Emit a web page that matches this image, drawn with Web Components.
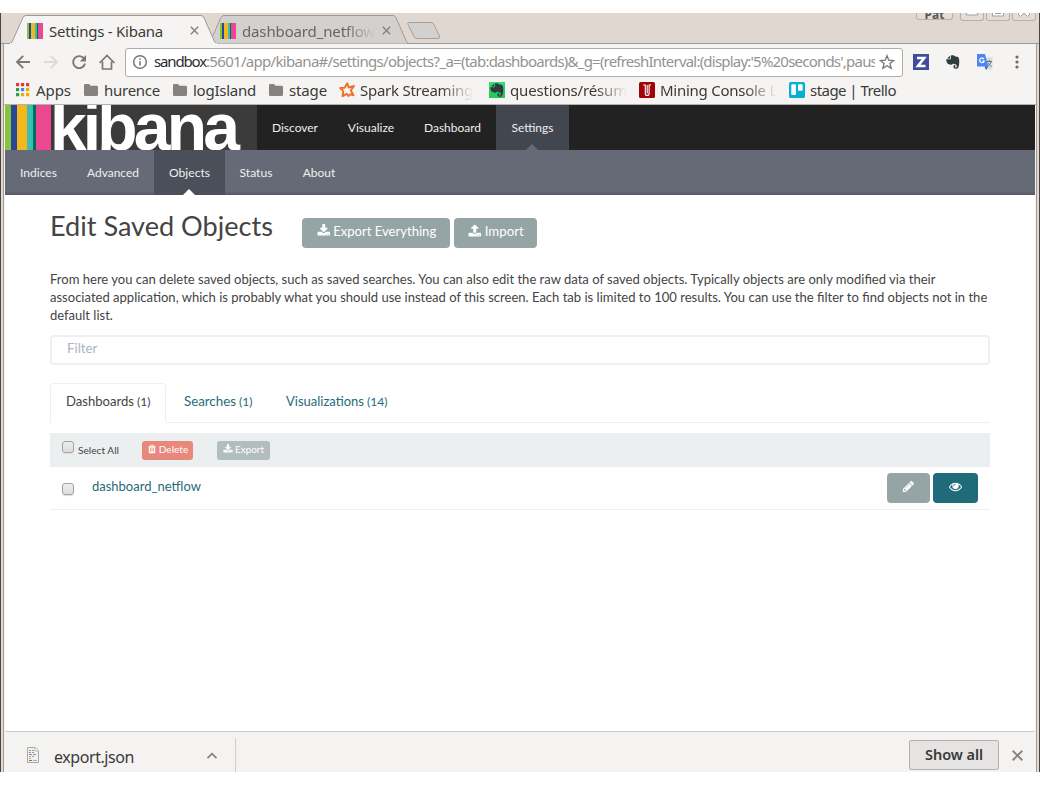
<!DOCTYPE html>
<html lang="en">
<head>
<meta charset="utf-8">
<title>Settings - Kibana</title>
<style>
html,body{margin:0;padding:0;background:#fff}
body{width:1040px;height:785px;overflow:hidden;padding-top:13px;box-sizing:border-box}
</style>
</head>
<body>
<browser-window></browser-window>
<script>
const UI = '"Noto Sans","Open Sans",sans-serif';
const LATO = 'Lato,"Open Sans",sans-serif';

function define(name, html, extra) {
  const tpl = document.createElement('template');
  tpl.innerHTML = typeof html === 'string' ? html : '';
  customElements.define(name, class extends HTMLElement {
    connectedCallback() {
      if (this.shadowRoot) return;
      const root = this.attachShadow({ mode: 'open' });
      if (typeof html === 'function') root.innerHTML = html(this);
      else root.appendChild(tpl.content.cloneNode(true));
      if (extra) extra(this, root);
    }
  });
}

/* Text set to a given advance width, by letter spacing or (mode="size") by font size. */
define('fit-text', '<style>:host{display:inline-block;white-space:pre;flex:none}span{display:inline-block}</style><span><slot></slot></span>', (el, root) => {
  const w = parseFloat(el.getAttribute('w'));
  const span = root.querySelector('span');
  el.style.width = w + 'px';
  const natural = span.getBoundingClientRect().width;
  if (!natural) return;
  if (el.getAttribute('mode') === 'size') {
    const fs = parseFloat(getComputedStyle(el).fontSize);
    span.style.fontSize = (fs * w / natural).toFixed(3) + 'px';
  } else {
    span.style.letterSpacing = ((w - natural) / el.textContent.length).toFixed(3) + 'px';
  }
});

/* Icons */
const FA = {
  download: 'M1344 1344q0-26-19-45t-45-19-45 19-19 45 19 45 45 19 45-19 19-45zm256 0q0-26-19-45t-45-19-45 19-19 45 19 45 45 19 45-19 19-45zm128-224v320q0 40-28 68t-68 28h-1472q-40 0-68-28t-28-68v-320q0-40 28-68t68-28h465l135 136q58 56 136 56t136-56l136-136h464q40 0 68 28t28 68zm-325-569q17 41-14 70l-448 448q-18 19-45 19t-45-19l-448-448q-31-29-14-70 17-39 59-39h256v-448q0-26 19-45t45-19h256q26 0 45 19t19 45v448h256q42 0 59 39z',
  upload: 'M1344 1472q0-26-19-45t-45-19-45 19-19 45 19 45 45 19 45-19 19-45zm256 0q0-26-19-45t-45-19-45 19-19 45 19 45 45 19 45-19 19-45zm128-224v320q0 40-28 68t-68 28h-1472q-40 0-68-28t-28-68v-320q0-40 28-68t68-28h427q21 56 70.5 92t110.5 36h256q61 0 110.5-36t70.5-92h427q40 0 68 28t28 68zm-325-648q-17 40-59 40h-256v448q0 26-19 45t-45 19h-256q-26 0-45-19t-19-45v-448h-256q-42 0-59-40-17-39 14-69l448-448q18-19 45-19t45 19l448 448q31 30 14 69z',
  pencil: 'M491 1536l91-91-235-235-91 91v107h128v128h107zm523-928q0-22-22-22-10 0-17 7l-542 542q-7 7-7 17 0 22 22 22 10 0 17-7l542-542q7-7 7-17zm-54-192l416 416-832 832h-416v-416zm683 96q0 53-37 90l-166 166-416-416 166-165q36-38 90-38 53 0 91 38l235 234q37 39 37 91z',
  eye: 'M1664 960q-152-236-381-353 61 104 61 225 0 185-131.5 316.5t-316.5 131.5-316.5-131.5-131.5-316.5q0-121 61-225-229 117-381 353 133 205 333.5 326.5t434.5 121.5 434.5-121.500 333.500-326.500zm-720-384q0-20-14-34t-34-14q-125 0-214.500 89.500t-89.500 214.500q0 20 14 34t34 14 34-14 14-34q0-86 61-147t147-61q20 0 34-14t14-34zm848 384q0 34-20 69-140 230-376.500 368.500t-499.500 138.500-499.500-139-376.500-368q-20-35-20-69t20-69q140-229 376.500-368t499.500-139 499.500 139 376.500 368q20 35 20 69z',
  trash: 'M704 1376v-704q0-14-9-23t-23-9h-64q-14 0-23 9t-9 23v704q0 14 9 23t23 9h64q14 0 23-9t9-23zm256 0v-704q0-14-9-23t-23-9h-64q-14 0-23 9t-9 23v704q0 14 9 23t23 9h64q14 0 23-9t9-23zm256 0v-704q0-14-9-23t-23-9h-64q-14 0-23 9t-9 23v704q0 14 9 23t23 9h64q14 0 23-9t9-23zm-544-992h448l-48-117q-7-9-17-11h-317q-10 2-17 11zm928 32v64q0 14-9 23t-23 9h-96v948q0 83-47 143.500t-113 60.500h-832q-66 0-113-58.500t-47-141.500v-952h-96q-14 0-23-9t-9-23v-64q0-14 9-23t23-9h309l70-167q15-37 54-63t79-26h320q40 0 79 26t54 63l70 167h309q14 0 23 9t9 23z'
};
const ELEPHANT = '<path fill="#2f3c3f" d="M2 4.600 5 1.800V4.600zM5.800 1.600c1.800-.6 3.400-.2 3.900.7 1.600.2 3.300.4 3.900 1.200 1 2.500.9 6.600-.1 9.500-.4 1.300-1.400 1.900-2.900 1.800-1.600-.1-2.400-1-2.200-2.200.1-1.100 1-1.500 2.100-1.300v1.100c-.8 0-.9 1 0 1.200 1.100.2 1.400-.7 1.300-1.900-.1-1.100-1.100-1.300-2.400-1.400-.7 0-1.100-.3-1.300-1-.3 1.100-1 1.500-2.100 1.400-2.200-.2-3.600-.8-3.900-1.900C1.400 7.500 1.200 6.400 1.300 5.300H4.900q.9 0 .9-.9z"/>';
const GLYPH = {
  kibana: '<path fill="#84c441" d="M0 0h3v16H0z"/><path fill="#2a4696" d="M2 0h2v16H2z"/><path fill="#f3b81c" d="M4 0h4v16H4z"/><path fill="#3cbeb1" d="M8 0h2.500v16H8z"/><path fill="#006c62" d="M10 0h1.200v16H10z"/><path fill="#eb4890" d="M11 0h5v16h-5z"/>',
  close: '<path stroke="#86837f" stroke-width="1.800" d="M3.500 3.500l9 9M12.500 3.500l-9 9"/>',
  back: '<path fill="none" stroke="#7a7876" stroke-width="1.900" d="M15 8H2M8.200 1.800 2 8l6.200 6.200"/>',
  forward: '<path fill="none" stroke="#dddbd9" stroke-width="1.900" d="M1 8h13M7.800 1.800 14 8l-6.200 6.200"/>',
  reload: '<path fill="none" stroke="#7a7876" stroke-width="1.900" d="M13.300 5A6 6 0 1 0 14 9.500"/><path fill="#7a7876" d="M15 1v6.400H8.800z"/>',
  home: '<path fill="none" stroke="#7a7876" stroke-width="1.700" d="M.6 9 8 1.500l7.400 7.500M3.500 7.500V15h9V7.500"/>',
  info: '<circle cx="8" cy="8" r="6.300" fill="none" stroke="#7a7876" stroke-width="1.500"/><path fill="#7a7876" d="M7.200 7.200h1.600v4.400H7.200zM7.200 4.400h1.600V6H7.200z"/>',
  star: '<path fill="none" stroke="#767472" stroke-width="1.300" d="m8 1.700 1.800 4.500 4.900.3-3.800 3.100 1.300 4.700L8 11.700l-4.200 2.600 1.300-4.700-3.800-3.100 4.900-.3z"/>',
  zed: '<path fill="#3f4c9e" d="M0 0h16v16H0z"/><path fill="none" stroke="#fff" stroke-width="2.600" d="M4 4h7.200L5 12h7.500"/>',
  elephant: ELEPHANT,
  evernote: '<defs><linearGradient id="g" x2="0" y2="1"><stop stop-color="#34df6d"/><stop offset="1" stop-color="#22c55a"/></linearGradient></defs><path fill="url(#g)" d="M0 0h16v16H0z"/>' + ELEPHANT,
  translate: '<path fill="#d9dcde" d="M6 3.500h9.500v12H9z"/><path fill="none" stroke="#5f7880" d="M9.500 7.500H15M12.300 6v1.500M14 7.500c-.5 2.500-2 4-4 5M10.800 8.500c1 2 2 3 3.700 3.900"/><path fill="#4a87f0" d="M0 0h8l3.300 12.500H0z"/><path fill="#3367d6" d="M7.500 12.500h3.800L9 16z"/><path fill="none" stroke="#fff" stroke-width="1.200" d="M7 5.200A2.300 2.300 0 1 0 7.200 7H5"/>',
  dots: '<g fill="#6f6d6b"><circle cx="8" cy="3" r="1.600"/><circle cx="8" cy="8" r="1.600"/><circle cx="8" cy="13" r="1.600"/></g>',
  apps: '<g fill="#e8382f"><path d="M1 1h3.200v3.200H1zM6 1h3.200v3.200H6zM11 1h3.200v3.200H11z"/></g><path fill="#2f9a55" d="M1 6h3.200v3.200H1zM1 11h3.200v3.200H1z"/><path fill="#4285f4" d="M6 6h3.200v3.200H6z"/><path fill="#f5a800" d="M11 6h3.200v3.200H11zM6 11h3.200v3.200H6zM11 11h3.200v3.200H11z"/>',
  folder: '<path fill="#858381" d="M0 3.300Q0 2 1.300 2H5l1.600 1.800h6.100q1.300 0 1.300 1.300v7.600q0 1.300-1.300 1.300H1.300Q0 14 0 12.700z"/>',
  spark: '<path fill="none" stroke="#ee7226" stroke-width="2" stroke-linejoin="round" d="M4.300 9 1.300 6l4.300-.2L8.300 1.300l1.400 4.200 5.300-1.500-3.200 4.500 2.700 4.700-4.300-.9M4.300 8.800 3.600 14.200l4-2.400 2.600 2.800"/>',
  mining: '<rect width="16" height="16" rx="1.500" fill="#a00308"/><path fill="none" stroke="#fff" stroke-width="1.100" d="M4.200 3H6.300V11.500q0 2 1.900 2t1.900-2V3H12M8.200 3v8.500"/>',
  trello: '<rect width="16" height="16" rx="1.600" fill="#0aaed0"/><rect x="2.300" y="2.300" width="4.600" height="10.700" rx=".8" fill="#fff"/><rect x="9" y="2.300" width="4.600" height="6.500" rx=".8" fill="#fff"/>',
  file: '<path fill="#f1f1f0" stroke="#a9a9a8" d="M2.500.5h8L13.500 3.500v12h-11z"/><path fill="#fff" stroke="#bcbcbb" d="M10 .5v3.500h3.500"/><path stroke="#7a9bb5" stroke-dasharray="2 1" d="M4 3.500h5M4 5.500h6"/><path stroke="#b07aa8" stroke-dasharray="3 1" d="M4 7.500h8"/><path stroke="#82b77d" stroke-dasharray="2 1" d="M4 9.500h6M4 11.500h3"/><path stroke="#d9494b" d="M4 13.500h3"/><path stroke="#aaa" d="M8 13.500h4"/>',
  up: '<path fill="none" stroke="#858381" stroke-width="1.800" d="m3.500 10.200 4.500-4.500 4.500 4.500"/>'
};
define('ui-icon', el => {
  const n = el.getAttribute('name'), s = el.getAttribute('size') || 16, f = FA[n];
  return `<style>:host{display:block;flex:none;width:${s}px;height:${s}px}svg{display:block}</style>
  <svg width="${s}" height="${s}" viewBox="${f ? '0 0 1792 1792' : '0 0 16 16'}">${f ? `<path fill="currentColor" d="${f}"/>` : GLYPH[n]}</svg>`;
});

/* Browser frame */
define('browser-tab', el => {
  const w = +el.getAttribute('width'), on = el.hasAttribute('active');
  return `<style>
  :host{display:grid;flex:none;width:${w}px;height:31px;z-index:${on ? 2 : 1};position:relative}
  svg,.row{grid-area:1/1}
  .row{display:flex;align-items:center;box-sizing:border-box;height:29px;padding:6px 16px 0 ${on ? 17 : 12}px;color:${on ? '#3d3b39' : '#686563'};font:15px/20px ${UI}}
  .label{flex:1;margin-left:6px;overflow:hidden;height:20px;${on ? '' : '-webkit-mask:linear-gradient(90deg,#000 103px,transparent 133px)'}}
  </style>
  <svg width="${w}" height="31"><path fill="${on ? '#f5f4f3' : '#d3d1cf'}" stroke="#a09a94" d="M-.5 30.500Q1.500 30.300 2.300 28.500L12.800 4.800Q13.800 2.500 16 2.500H${w - 16}Q${w - 14} 2.500 ${w - 13} 4.800L${w - 2.500} 28.500Q${w - 1.500} 30.500 ${w} 30.500"/>${on ? `<path fill="#f5f4f3" d="M0 30h${w}v1H0z"/>` : ''}</svg>
  <div class="row"><ui-icon name="kibana"></ui-icon><div class="label"><slot></slot></div><ui-icon name="close" size="13"></ui-icon></div>`;
});
define('frame-button', `<style>:host{display:flex;flex:none;box-sizing:border-box;border:1px solid #b9b0a9;border-radius:0 0 3px 3px;border-top:0;height:8px;justify-content:center;align-items:flex-end;overflow:hidden;background:#e4ddd7;color:#5b5652;font:bold 12px/12px ${UI}}</style><slot></slot>`);

define('tab-strip', `<style>
:host{display:flex;height:31px;background:#dfd7d0;box-shadow:inset 0 -1px #a09a94;overflow:hidden}
.new{flex:none;margin:8px 0 0 -3px;display:block}
.ctl{display:flex;gap:2px;margin-left:auto;padding-right:3px;align-items:flex-start}
.pat{width:37px;height:7px;margin-right:5px}.b{width:24px}
svg{flex:none;display:block}
</style>
<browser-tab active width="207"><fit-text w="114">Settings - Kibana</fit-text></browser-tab>
<browser-tab width="201" style="margin-left:-9px"><fit-text w="133">dashboard_netflow</fit-text></browser-tab>
<svg class="new" width="36" height="19"><path fill="#d3d1cf" stroke="#a7a09a" d="M3 1.500H25Q27 1.500 28 3.500L33.500 15Q34 17.500 32 17.500H11Q9 17.500 8 15.500L2 3.500Q1 1.500 3 1.500Z"/></svg>
<div class="ctl"><frame-button class="pat"><span style="margin-bottom:-2px">Pat</span></frame-button>
<frame-button class="b"><svg width="12" height="8"><path fill="#fff" stroke="#a49c96" d="M.5-1h11v4H.5z"/></svg></frame-button>
<frame-button class="b"><svg width="12" height="8"><path fill="#fff" stroke="#a49c96" d="M.5-2h11v6H.5z"/><path stroke="#a49c96" d="M3 1.500h6"/></svg></frame-button>
<frame-button class="b"><svg width="12" height="8"><path fill="#fff" stroke="#a49c96" d="M6 1 2.500 4.500 0 2 3-2H9L12 2 9.500 4.500Z"/></svg></frame-button></div>`);

define('address-bar', `<style>
:host{display:flex;align-items:center;height:36px;padding:0 10px 0 11px;font:15px/20px ${UI}}
.nav{display:flex;gap:12px;width:110px}
.box{display:flex;align-items:center;box-sizing:border-box;width:778px;height:29px;background:#fff;border:1px solid #b0aca8;border-radius:3px;padding:0 6px 0 6px}
.url{width:721px;height:22px;overflow:hidden;margin-left:6px;display:flex;color:#94928f;line-height:20px}
.url b{font-weight:400;color:#2d2c2b}
.ext{display:flex;margin-left:10px;gap:16px}
</style>
<div class="nav"><ui-icon name="back"></ui-icon><ui-icon name="forward"></ui-icon><ui-icon name="reload"></ui-icon><ui-icon name="home"></ui-icon></div>
<div class="box"><ui-icon name="info"></ui-icon><div class="url"><b><fit-text w="52">sandbox</fit-text></b><fit-text w="255">:5601/app/kibana#/settings/objects?_a=</fit-text><fit-text w="416">(tab:dashboards)&amp;_g=(refreshInterval:(display:'5%20seconds',paus</fit-text></div><ui-icon name="star" style="margin-left:4px"></ui-icon></div>
<div class="ext"><ui-icon name="zed"></ui-icon><ui-icon name="elephant"></ui-icon><ui-icon name="translate"></ui-icon><ui-icon name="dots"></ui-icon></div>`);

define('book-mark', el => `<style>
:host{display:flex;flex:none;align-items:center;width:${el.getAttribute('width')}px;height:22px}
ui-icon{margin-right:${el.getAttribute('gap') || 5}px}
div{height:22px}
.fade{-webkit-mask:linear-gradient(90deg,#000 calc(100% - 32px),transparent 100%)}
</style><ui-icon name="${el.getAttribute('icon')}"></ui-icon><div class="${el.hasAttribute('fade') ? 'fade' : ''}"><slot></slot></div>`);
define('bookmarks-bar', `<style>:host{display:flex;box-sizing:border-box;height:25px;padding:0 0 3px 11px;border-bottom:1px solid #b4b1ae;color:#3b3a39;font:15px/22px ${UI};align-items:flex-start}
book-mark{margin-top:-1px}</style>
<book-mark icon="apps" width="69"><fit-text w="35">Apps</fit-text></book-mark>
<book-mark icon="folder" width="89" gap="4"><fit-text w="56">hurence</fit-text></book-mark>
<book-mark icon="folder" width="96" gap="4"><fit-text w="63">logIsland</fit-text></book-mark>
<book-mark icon="folder" width="70" gap="4"><fit-text w="38">stage</fit-text></book-mark>
<book-mark icon="spark" width="150" fade><fit-text w="113">Spark Streaming</fit-text></book-mark>
<book-mark icon="evernote" width="150" fade><fit-text w="117">questions/résum</fit-text></book-mark>
<book-mark icon="mining" width="150" fade><fit-text w="117">Mining Console L</fit-text></book-mark>
<book-mark icon="trello" width="150"><fit-text w="86">stage | Trello</fit-text></book-mark>`);

/* Kibana application */
define('kibana-logo', `<style>
:host{display:flex;width:252px;height:45px;background:#3b3b3b;overflow:hidden;color:#fff;font:bold 66px/45px "Liberation Sans",Arial,sans-serif}
svg{flex:none}fit-text{margin-left:-5px}
</style>
<svg width="50" height="45"><path fill="#84c441" d="M0 0h6v45H0z"/><path fill="#2a4696" d="M6 0h6v45H6z"/><path fill="#f3b81c" d="M12 0h10v45H12z"/><path fill="#3cbeb1" d="M22 0h6v45h-6z"/><path fill="#006c62" d="M28 0h3v45h-3z"/><path fill="#eb4890" d="M31 0h15v45H31z"/></svg>
<fit-text w="186">kibana</fit-text>`);
define('nav-item', el => `<style>
:host{display:flex;flex:none;flex-direction:column;align-items:center;box-sizing:border-box;height:45px;width:${el.getAttribute('width')}px;padding-top:13px;color:#eef0f0;font:13px/19px ${LATO}}
:host([active]){background:var(--active)}
i{display:none;margin:auto 1px 0 0;border:6.500px solid transparent;border-top:0;border-bottom-color:var(--arrow)}
:host([active]) i{display:block}
</style><slot></slot><i></i>`);
define('kibana-nav', `<style>
:host{display:block}
.top,.sub{display:flex;height:45px}
.top{background:#222;--active:#42464e;--arrow:#666a76}
.sub{background:linear-gradient(#666a76 41px,#545863);--active:#4b4f5a;--arrow:#fff}
</style>
<div class="top"><kibana-logo></kibana-logo>
<nav-item width="76"><fit-text mode="size" w="46">Discover</fit-text></nav-item>
<nav-item width="76"><fit-text mode="size" w="46.500">Visualize</fit-text></nav-item>
<nav-item width="87"><fit-text mode="size" w="57">Dashboard</fit-text></nav-item>
<nav-item width="73" active><fit-text mode="size" w="42">Settings</fit-text></nav-item></div>
<div class="sub">
<nav-item sub width="67"><fit-text mode="size" w="37">Indices</fit-text></nav-item>
<nav-item sub width="82"><fit-text mode="size" w="52">Advanced</fit-text></nav-item>
<nav-item sub width="71" active><fit-text mode="size" w="41">Objects</fit-text></nav-item>
<nav-item sub width="62"><fit-text mode="size" w="33">Status</fit-text></nav-item>
<nav-item sub width="64"><fit-text mode="size" w="32.500">About</fit-text></nav-item></div>`);

define('k-button', el => `<style>
:host{display:flex;flex:none;box-sizing:border-box;width:${el.getAttribute('width')}px;height:30px;padding-top:3px;justify-content:center;border-radius:4px;background:#95a5a6;color:#fff;font:14px/20px ${LATO};gap:3px}
:host([small]){height:19px;padding-top:0;font:10px/17px ${LATO};border-radius:3px;gap:2px}
:host([danger]){background:#e8877c}:host([pale]){background:#b2bdbe}:host([primary]){background:#1f6b7a}
:host([small]) ui-icon{opacity:.95}
ui-icon{margin-top:${el.getAttribute('itop') || (el.hasAttribute('small') ? 3 : 3)}px}
</style><ui-icon name="${el.getAttribute('icon')}" size="${el.getAttribute('isize') || 13.500}"></ui-icon><slot></slot>`);
define('check-box', `<style>:host{display:block;flex:none;box-sizing:border-box;width:12px;height:12px;border:1px solid #a3a3a3;border-radius:3px;background:linear-gradient(#eee,#dcdcdc);box-shadow:0 1px 1px #ddd}</style>`);
define('object-tab', el => `<style>
:host{display:flex;box-sizing:border-box;height:40px;width:${el.getAttribute('width')}px;padding:8px 0 0 15px;gap:3px;border:1px solid transparent;color:#1f6b7a;font:13px/18px ${LATO}}
:host([active]){border-color:#ecf0f1;border-bottom-color:#fff;border-radius:4px 4px 0 0;background:#fff;color:#444}
</style><slot></slot>`);

define('saved-objects', `<style>
:host{display:block;padding:0 45px;color:#444;font:13px/18px ${LATO};background:#fff}
.head{display:flex;height:75px;box-sizing:border-box;gap:4px}
h1{margin:14px 26px 0 0;font:400 27px/34px ${LATO};height:34px}
.head k-button{margin-top:23px}
.head fit-text{margin-right:-1px}
p{margin:0;height:54px;display:flex;flex-direction:column}
.filter{margin-top:11px;box-sizing:border-box;height:30px;border:2px solid #ecf0f1;border-radius:4px;padding:2px 15px;color:#acb6c0;line-height:18px}
.tabs{display:flex;height:40px;margin-top:18px;box-shadow:inset 0 -1px #ecf0f1}
.bar{display:flex;box-sizing:border-box;height:34px;margin-top:10px;padding:8px 12px 0;background:#ebefef;font-size:11px;line-height:18px}
.row{display:flex;box-sizing:border-box;height:43px;padding:6px 12px 0;border-bottom:1px solid #ecf0f1}
a{color:#1f6b7a}
</style>
<div class="head"><h1><fit-text mode="size" w="223">Edit Saved Objects</fit-text></h1>
<k-button width="148" icon="download"><fit-text mode="size" w="103">Export Everything</fit-text></k-button>
<k-button width="83" icon="upload"><fit-text mode="size" w="39">Import</fit-text></k-button></div>
<p><fit-text mode="size" w="886.500">From here you can delete saved objects, such as saved searches. You can also edit the raw data of saved objects. Typically objects are only modified via their</fit-text><fit-text mode="size" w="938">associated application, which is probably what you should use instead of this screen. Each tab is limited to 100 results. You can use the filter to find objects not in the</fit-text><fit-text mode="size" w="63">default list.</fit-text></p>
<div class="filter"><fit-text mode="size" w="30.500">Filter</fit-text></div>
<div class="tabs">
<object-tab width="116" active><fit-text mode="size" w="68">Dashboards</fit-text><fit-text mode="size" w="13.500">(1)</fit-text></object-tab>
<object-tab width="102" style="margin-left:2px"><fit-text mode="size" w="52">Searches</fit-text><fit-text mode="size" w="13.500">(1)</fit-text></object-tab>
<object-tab width="120"><fit-text mode="size" w="78">Visualizations</fit-text><fit-text mode="size" w="20.500">(14)</fit-text></object-tab></div>
<div class="bar"><check-box></check-box><fit-text mode="size" w="41" style="margin-left:4px">Select All</fit-text>
<k-button small danger width="51" icon="trash" isize="10" style="margin-left:23px"><fit-text mode="size" w="29.500">Delete</fit-text></k-button>
<k-button small pale width="53" icon="download" isize="10" style="margin-left:24px"><fit-text mode="size" w="29">Export</fit-text></k-button></div>
<div class="row"><check-box style="margin-top:10px"></check-box><a style="margin:4px auto 0 18px"><fit-text mode="size" w="109">dashboard_netflow</fit-text></a>
<k-button width="43" icon="pencil" isize="13" itop="4"></k-button><k-button primary width="45" icon="eye" isize="13" itop="4" style="margin-left:3px"></k-button></div>`);

define('download-shelf', `<style>
:host{display:flex;box-sizing:border-box;height:54px;border-top:1px solid #cfcdcb;background:#f4f3f2;color:#3b3a39;font:16px/22px ${UI}}
.item{display:flex;box-sizing:border-box;width:231px;height:47px;margin-top:6px;border-right:1px solid #cfcdcb;padding:8px 15px 0 20px}
.btn{box-sizing:border-box;width:90px;height:30px;margin:8px 10px 0 auto;border:1px solid #b3b0ad;border-radius:2px;background:#e6e4e3;font:600 14.500px/27px ${UI};display:flex;justify-content:center}
</style>
<div class="item"><ui-icon name="file" style="margin-top:1px"></ui-icon><fit-text w="80" style="margin-left:13px">export.json</fit-text><ui-icon name="up" style="margin:2px 0 0 auto"></ui-icon></div>
<div class="btn"><fit-text w="58">Show all</fit-text></div><ui-icon name="close" size="17" style="margin:15px 9px 0 0"></ui-icon>`);

define('browser-window', `<style>
:host{display:flex;flex-direction:column;box-sizing:border-box;width:1040px;height:759px;overflow:hidden;background:#dfd7d0;border:solid #4a4443;border-width:0 1px}
tab-strip{flex:none;padding-left:9px}
.inner{flex:1;display:flex;flex-direction:column;margin:0 2px;border:solid #a39a94;border-width:0 1px;background:#f5f4f3;min-height:0;padding:0 1px}
address-bar{margin:0 -1px;flex:none}bookmarks-bar{flex:none;margin:0 -1px}
kibana-nav{flex:none}saved-objects{height:536px;flex:none}
</style>
<tab-strip></tab-strip>
<div class="inner"><address-bar></address-bar><bookmarks-bar></bookmarks-bar><kibana-nav></kibana-nav><saved-objects></saved-objects><download-shelf></download-shelf></div>`);
</script>
</body>
</html>
